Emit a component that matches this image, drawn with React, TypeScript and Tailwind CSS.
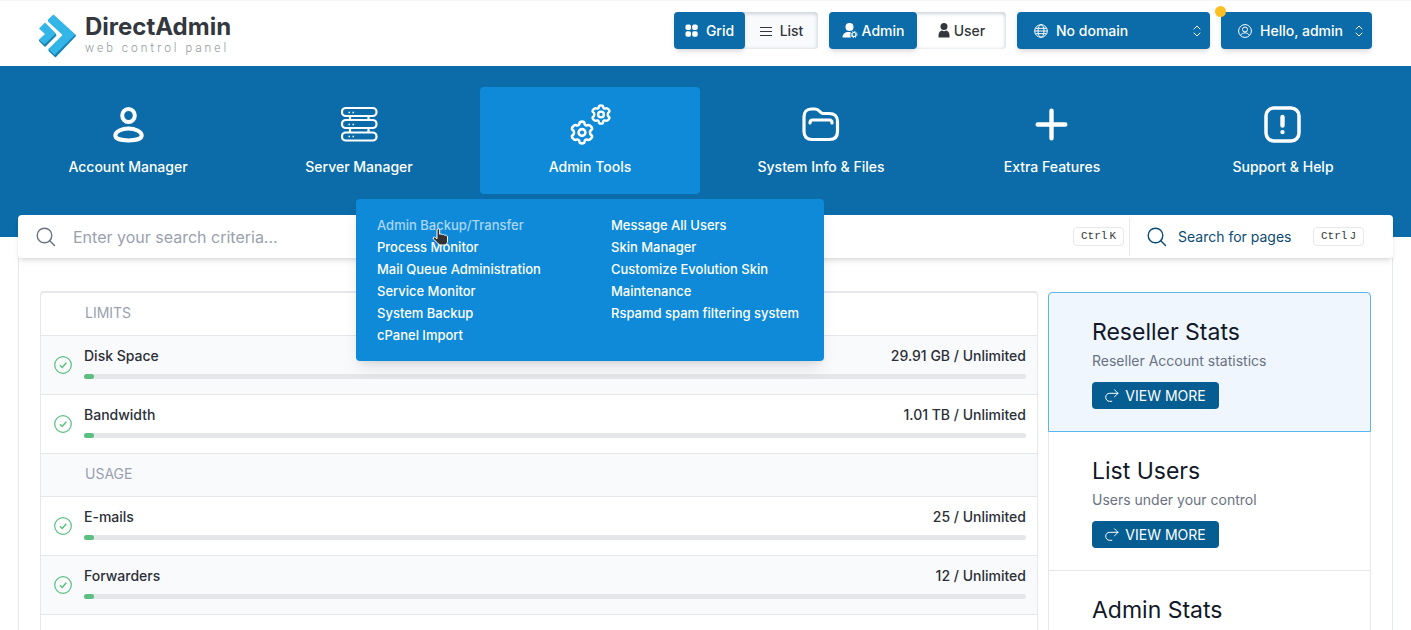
import { useState } from "react";
import type { ReactNode } from "react";
import clsx from "clsx";

type Stat = { label: string; value: string; percent: number };

const limits: Stat[] = [
  { label: "Disk Space", value: "29.91 GB / Unlimited", percent: 1 },
  { label: "Bandwidth", value: "1.01 TB / Unlimited", percent: 1 },
];

const usage: Stat[] = [
  { label: "E-mails", value: "25 / Unlimited", percent: 1 },
  { label: "Forwarders", value: "12 / Unlimited", percent: 1 },
];

const menuLeft = [
  "Admin Backup/Transfer",
  "Process Monitor",
  "Mail Queue Administration",
  "Service Monitor",
  "System Backup",
  "cPanel Import",
];

const menuRight = [
  "Message All Users",
  "Skin Manager",
  "Customize Evolution Skin",
  "Maintenance",
  "Rspamd spam filtering system",
];

const widgets: { title: string; text?: string }[] = [
  { title: "Reseller Stats", text: "Reseller Account statistics" },
  { title: "List Users", text: "Users under your control" },
  { title: "Admin Stats" },
];

/* Icons */

const LogoMark = () => (
  <svg width="38" height="44" viewBox="0 0 38 44" aria-hidden="true">
    <path d="M30 20l6.500.5L37 22 16.500 43.500l-7-6.500v-2z" fill="#1480b4" />
    <path d="M9 5.500l5.500-5L36.500 20.500 15.500 41 9.500 35 23.500 21 9 7.500z" fill="#33b5e8" />
    <path d="M5 29l11.500-9.500 1 2L6 33l-6-6v-1.500z" fill="#1480b4" />
    <path d="M0 14.500L6 8.500 17 19.500 5.500 30.500 0 25.500 6 20z" fill="#33b5e8" />
  </svg>
);

const GridIcon = () => (
  <svg width="13" height="13" viewBox="0 0 13 13" fill="currentColor" aria-hidden="true">
    <rect x="0.500" y="0.500" width="5.500" height="5.500" rx="1.800" />
    <rect x="7.200" y="0.500" width="5.500" height="5.500" rx="1.800" />
    <rect x="0.500" y="7.200" width="5.500" height="5.500" rx="1.800" />
    <rect x="7.200" y="7.200" width="5.500" height="5.500" rx="1.800" />
  </svg>
);

const ListIcon = () => (
  <svg width="12" height="10" viewBox="0 0 12 10" stroke="currentColor" aria-hidden="true">
    <path d="M0 1.500h12M0 5.500h12M0 9.500h12" strokeWidth="1" />
  </svg>
);

const UserCogIcon = () => (
  <svg width="16" height="15" viewBox="0 0 16 15" fill="currentColor" aria-hidden="true">
    <circle cx="7.500" cy="4" r="4" />
    <path d="M.5 14.500C.5 11 3 9 6.500 9c1 0 1.800.1 2.400.4-1 1.500-1 3.500.2 5.100z" />
    <circle cx="12" cy="11.500" r="2" fill="none" stroke="currentColor" strokeWidth="1.200" />
    <circle cx="12" cy="11.500" r="3.100" fill="none" stroke="currentColor" strokeWidth="1" strokeDasharray="1.200 1.230" />
  </svg>
);

const UserSolidIcon = () => (
  <svg width="12" height="15" viewBox="0 0 12 15" fill="currentColor" aria-hidden="true">
    <circle cx="6" cy="3.500" r="3.500" />
    <path d="M.5 14.500v-2.300C.5 9.800 2 8 4 7.600c1.200.7 2.800.7 4 0 2 .4 3.500 2.200 3.500 4.600v2.300z" />
  </svg>
);

const GlobeIcon = () => (
  <svg width="14" height="14" viewBox="0 0 14 14" fill="none" stroke="currentColor" aria-hidden="true">
    <circle cx="7" cy="7" r="6.300" />
    <ellipse cx="7" cy="7" rx="3" ry="6.300" />
    <path d="M1.500 4.300h11M1.500 9.700h11M.7 7h12.600" />
  </svg>
);

const UserCircleIcon = () => (
  <svg width="14" height="14" viewBox="0 0 14 14" fill="none" stroke="currentColor" aria-hidden="true">
    <circle cx="7" cy="7" r="6.400" />
    <circle cx="7" cy="5.500" r="2.500" />
    <path d="M2.600 11.300c1-1.700 2.400-2.400 4.400-2.400s3.400.7 4.400 2.400" />
  </svg>
);

const SelectorIcon = () => (
  <svg width="8" height="12" viewBox="0 0 8 12" fill="none" stroke="currentColor" strokeLinecap="round" strokeLinejoin="round" aria-hidden="true">
    <path d="M1 4l3-3 3 3M1 8l3 3 3-3" />
  </svg>
);

const AccountIcon = () => (
  <svg width="40" height="40" viewBox="0 0 40 40" fill="none" stroke="currentColor" strokeWidth="4" aria-hidden="true">
    <ellipse cx="20.500" cy="10.500" rx="6.300" ry="6.600" />
    <path d="M20.500 23.500c6.500 0 13.200 3.200 13.200 7 0 3.400-6.700 4.900-13.200 4.900S7.300 33.900 7.300 30.500c0-3.800 6.700-7 13.200-7z" />
  </svg>
);

const ServerIcon = () => (
  <svg width="40" height="40" viewBox="0 0 40 40" fill="none" stroke="currentColor" strokeWidth="2.200" aria-hidden="true">
    <rect x="3" y="3" width="34.500" height="8" rx="3.800" />
    <rect x="3" y="15" width="34.500" height="8" rx="3.800" />
    <rect x="3" y="27.500" width="34.500" height="8" rx="3.800" />
    <path d="M11 11v4M29.500 11v4M11 23v4M29.500 23v4" />
    <path d="M9.500 7.500h1.500M13.500 7.500h1.500M9.500 19.500h1.500M13.500 19.500h1.500M9.500 31.500h1.500M13.500 31.500h1.500" strokeWidth="1.500" />
  </svg>
);

// six-toothed gear outline, centred on the origin
const Gear = () => (
  <>
    <path d="M-2.500-9.200C-2.200-11.400 2.200-11.400 2.500-9.200 2.700-7.300 4-6.600 5.700-7.300 7.800-8.100 11.400-4.300 9.600-2.900 7.400-1.600 7.400 1.600 9.600 2.900 11.400 4.300 7.800 8.100 5.700 7.300 4 6.600 2.700 7.300 2.500 9.200 2.200 11.400-2.200 11.400-2.500 9.200-2.700 7.300-4 6.600-5.700 7.300-7.800 8.100-11.400 4.300-9.600 2.900-7.400 1.600-7.400-1.600-9.600-2.900-11.400-4.300-7.800-8.100-5.700-7.300-4-6.600-2.700-7.300-2.500-9.200z" />
    <circle r="3.400" />
  </>
);

const GearsIcon = () => (
  <svg width="44" height="44" viewBox="0 0 44 44" fill="none" stroke="currentColor" strokeWidth="2.600" strokeLinejoin="round" aria-hidden="true">
    <g transform="translate(14 29.500)">
      <Gear />
    </g>
    <g transform="translate(33 11.500) scale(.84)" strokeWidth="2.900">
      <Gear />
    </g>
  </svg>
);

const FolderIcon = () => (
  <svg width="40" height="40" viewBox="0 0 40 40" fill="none" stroke="currentColor" strokeWidth="3.200" strokeLinecap="round" strokeLinejoin="round" aria-hidden="true">
    <path d="M3 26.500V12c0-5 3-8 7-8h4c5 0 4.500 4.500 8.500 4.500h5.500c5.500 0 8.500 3 8.500 8v10c0 5-2.500 8-8 8H11c-5.500 0-8-3-8-8z" />
    <path d="M9 18c0-2 .5-3 2.500-3h17c2 0 2.500 1 2.500 3" />
  </svg>
);

const PlusIcon = () => (
  <svg width="40" height="40" viewBox="0 0 40 40" stroke="currentColor" strokeWidth="4.400" strokeLinecap="round" aria-hidden="true">
    <path d="M19.500 5.700v27.600M5.700 19.500h27.600" />
  </svg>
);

const HelpIcon = () => (
  <svg width="40" height="40" viewBox="0 0 40 40" fill="none" stroke="currentColor" aria-hidden="true">
    <rect x="3" y="3" width="33" height="33" rx="8" strokeWidth="3.500" />
    <path d="M19.500 12v8.500" strokeWidth="4.400" strokeLinecap="round" />
    <circle cx="19.500" cy="27.100" r="2.200" fill="currentColor" stroke="none" />
  </svg>
);

const SearchIcon = () => (
  <svg width="20" height="20" viewBox="0 0 20 20" fill="none" stroke="currentColor" strokeWidth="1.400" aria-hidden="true">
    <circle cx="8.500" cy="8.500" r="7.300" />
    <path d="M13.500 13.500l5 5" strokeLinecap="round" />
  </svg>
);

const CheckIcon = () => (
  <svg width="18" height="18" viewBox="0 0 18 18" fill="none" stroke="currentColor" aria-hidden="true">
    <circle cx="9" cy="9" r="8.300" strokeWidth="1.200" />
    <path d="M6 9.300l2.200 2.200L12.300 6.700" strokeWidth="1.500" />
  </svg>
);

const ForwardIcon = () => (
  <svg width="14" height="13" viewBox="0 0 14 13" fill="none" stroke="currentColor" strokeLinecap="round" strokeLinejoin="round" aria-hidden="true">
    <path d="M9.500.8L13 4.300 9.500 7.800M13 4.300H4.800C2.300 4.300.7 6 .7 8.200s1.600 4.100 3.800 4.100h2.300" />
  </svg>
);

const HandCursor = () => (
  <svg width="17" height="18" viewBox="0 0 17 18" className="pointer-events-none absolute left-[76px] top-[29px]" aria-hidden="true">
    <path
      d="M5 2c0-1.600 2.700-1.600 2.700 0v4.200c.5-.5 2.200-.3 2.500.5.700-.5 2.200-.2 2.500.6 1.200-.4 2.800.3 2.800 1.600v4.300c0 2-1.400 3.800-3.500 3.800H9c-1.500 0-2.500-.7-3.300-1.900L1.300 11c-.8-1.400.8-2.600 2-1.600L5 10.800z"
      fill="#333"
      stroke="#fff"
    />
  </svg>
);

const navItems: { label: string; icon: ReactNode }[] = [
  { label: "Account Manager", icon: <AccountIcon /> },
  { label: "Server Manager", icon: <ServerIcon /> },
  { label: "Admin Tools", icon: <GearsIcon /> },
  { label: "System Info & Files", icon: <FolderIcon /> },
  { label: "Extra Features", icon: <PlusIcon /> },
  { label: "Support & Help", icon: <HelpIcon /> },
];

/* Layout parts */

const Header = () => {
  const [view, setView] = useState("grid");
  const [role, setRole] = useState("admin");
  const on = "rounded bg-[#0b6ca9] text-white shadow-md";
  const off = "text-[#33373d]";

  return (
    <header className="flex h-[66px] items-start justify-between border-t border-[#f5f5fb] px-[39px] pt-[11px]">
      <a href="#" className="flex items-center gap-2" aria-label="DirectAdmin web control panel">
        <LogoMark />
        <span className="flex flex-col pb-1">
          <span className="text-2xl font-bold leading-[29px] text-[#33383f]">DirectAdmin</span>
          <span className="font-['Roboto',sans-serif] text-xs font-light leading-[14px] tracking-[3px] text-[#8f9499]">web control panel</span>
        </span>
      </a>

      <div className="flex gap-[11px] whitespace-nowrap text-sm font-medium">
        <div className="flex h-[37px] w-[144px] rounded bg-[#f8fafc] shadow-[inset_0_1px_4px_#b8c4d0]">
          <button onClick={() => setView("grid")} className={clsx("flex w-[71px] items-center justify-center gap-2", view === "grid" ? on : off)}>
            <GridIcon />
            Grid
          </button>
          <button onClick={() => setView("list")} className={clsx("flex flex-1 items-center justify-center gap-2", view === "list" ? on : off)}>
            <ListIcon />
            List
          </button>
        </div>

        <div className="flex h-[37px] w-[177px] rounded bg-white shadow-[inset_0_1px_4px_#b8c4d0]">
          <button onClick={() => setRole("admin")} className={clsx("flex w-[88px] items-center justify-center gap-1", role === "admin" ? on : off)}>
            <UserCogIcon />
            Admin
          </button>
          <button onClick={() => setRole("user")} className={clsx("flex flex-1 items-center justify-center gap-1", role === "user" ? on : off)}>
            <UserSolidIcon />
            User
          </button>
        </div>

        <button className="flex h-[37px] w-[193px] items-center gap-2 rounded bg-[#0b6ca9] pl-[17px] pr-[9px] text-white shadow-md">
          <GlobeIcon />
          No domain
          <span className="ml-auto">
            <SelectorIcon />
          </span>
        </button>

        <button className="relative flex h-[37px] w-[151px] items-center gap-2 rounded bg-[#0b6ca9] pl-[17px] pr-[9px] text-white shadow-md">
          <span className="absolute -left-1.5 -top-1.5 size-[11px] rounded-full bg-[#fcbf24]" />
          <UserCircleIcon />
          Hello, admin
          <span className="ml-auto">
            <SelectorIcon />
          </span>
        </button>
      </div>
    </header>
  );
};

const MenuColumn = ({ items }: { items: string[] }) => (
  <ul className="w-[234px] shrink-0">
    {items.map((item) => (
      <li key={item}>
        <a href="#" className={clsx("inline-block whitespace-nowrap align-top leading-[22px] hover:text-[#a9d6f5]", item === "Admin Backup/Transfer" ? "text-[#a9d6f5]" : "text-white")}>
          {item}
        </a>
      </li>
    ))}
  </ul>
);

const ToolsMenu = () => (
  <div className="absolute left-1/2 top-[112px] z-20 flex h-[162px] w-[468px] -translate-x-1/2 rounded bg-[#0e8ad9] pl-[21px] pt-[15px] text-left text-[13px] font-medium shadow-lg">
    <MenuColumn items={menuLeft} />
    <MenuColumn items={menuRight} />
    <HandCursor />
  </div>
);

const Nav = () => (
  <nav className="flex h-[171px] gap-[11px] bg-[#0b6ca9] px-[18px] pt-[21px] text-sm font-medium text-white">
    {navItems.map(({ label, icon }) => (
      <div key={label} className="relative flex-1">
        <a href="#" className={clsx("flex h-[107px] flex-col items-center rounded pt-4", label === "Admin Tools" && "bg-[#0e8ad9]")}>
          <span className="flex h-11 items-center">{icon}</span>
          <span className="mt-2 leading-6">{label}</span>
        </a>
        {label === "Admin Tools" && <ToolsMenu />}
      </div>
    ))}
  </nav>
);

const Kbd = ({ letter }: { letter: string }) => (
  <kbd className="flex h-[19px] w-[51px] items-center justify-center gap-0.5 rounded border border-gray-200 bg-white font-['Liberation_Mono',monospace] text-[11px] text-[#33373d]">
    <span>Ctrl</span>
    <span>{letter}</span>
  </kbd>
);

const SearchBar = () => (
  <div className="relative z-10 mx-[18px] -mt-[22px] flex h-[43px] items-center rounded bg-white shadow-md">
    <label htmlFor="search" className="pl-[18px] text-gray-500">
      <SearchIcon />
    </label>
    <input
      id="search"
      type="text"
      aria-label="Search"
      placeholder="Enter your search criteria..."
      className="h-full min-w-0 flex-1 pl-[17px] text-base text-gray-700 outline-none placeholder:text-gray-400"
    />
    <Kbd letter="K" />
    <button className="ml-[5px] flex h-[38px] w-[264px] items-center border-l border-gray-200 pl-[17px] text-[#0b4a75]">
      <SearchIcon />
      <span className="ml-[11px] text-sm">Search for pages</span>
      <span className="ml-auto mr-[29px]">
        <Kbd letter="J" />
      </span>
    </button>
  </div>
);

const SectionRow = ({ title, shaded }: { title: string; shaded?: boolean }) => (
  <h2 className={clsx("flex h-[43px] items-center border-b border-gray-200 pb-[3px] pl-[44px] text-sm text-gray-400", shaded && "bg-[#f9fafc]")}>{title}</h2>
);

const StatRow = ({ stat, shaded }: { stat: Stat; shaded?: boolean }) => (
  <div className={clsx("flex h-[59px] items-center border-b border-gray-200 pl-[13px] pr-[11px]", shaded && "bg-[#f9fafc]")}>
    <span className="text-[#5abf80]">
      <CheckIcon />
    </span>
    <div className="ml-3 flex-1 pb-[6px]">
      <div className="flex justify-between text-sm font-medium text-[#2b2f36]">
        <span>{stat.label}</span>
        <span>{stat.value}</span>
      </div>
      <div role="progressbar" aria-label={stat.label} aria-valuenow={stat.percent} className="mt-2 h-[5px] rounded-full bg-[#e5e6ea]">
        <div className="h-full min-w-[10px] rounded-full bg-[#5abf80]" style={{ width: `${stat.percent}%` }} />
      </div>
    </div>
  </div>
);

const Stats = () => (
  <section className="min-w-0 flex-1 rounded-t border border-t-2 border-gray-200">
    <SectionRow title="LIMITS" />
    {limits.map((stat, i) => (
      <StatRow key={stat.label} stat={stat} shaded={i % 2 === 0} />
    ))}
    <SectionRow title="USAGE" shaded />
    {usage.map((stat, i) => (
      <StatRow key={stat.label} stat={stat} shaded={i % 2 === 1} />
    ))}
  </section>
);

const Sidebar = () => (
  <aside className="mt-px w-[323px]">
    {widgets.map(({ title, text }, i) => (
      <article
        key={title}
        className={clsx("border px-[43px] pb-[22px] pt-[23px]", i === 0 ? "rounded-t border-[#5bb5ee] bg-[#eff6fe]" : "border-t-0 border-gray-200")}
      >
        <h3 className="text-[23px] leading-8 text-[#111827]">{title}</h3>
        {text && (
          <>
            <p className="mt-[3px] text-sm text-gray-500">{text}</p>
            <a href="#" className="mt-[11px] inline-flex h-[27px] w-[127px] items-center justify-center gap-1.5 rounded bg-[#065d92] align-top text-sm text-white">
              <ForwardIcon />
              VIEW MORE
            </a>
          </>
        )}
      </article>
    ))}
  </aside>
);

export default function App() {
  return (
    <div className="h-screen overflow-hidden bg-white font-['Inter',sans-serif]">
      <Header />
      <Nav />
      <SearchBar />
      <main className="mx-[18px] flex min-h-full gap-2.5 border-x border-gray-200 px-[21px] pt-[33px]">
        <Stats />
        <Sidebar />
      </main>
    </div>
  );
}
